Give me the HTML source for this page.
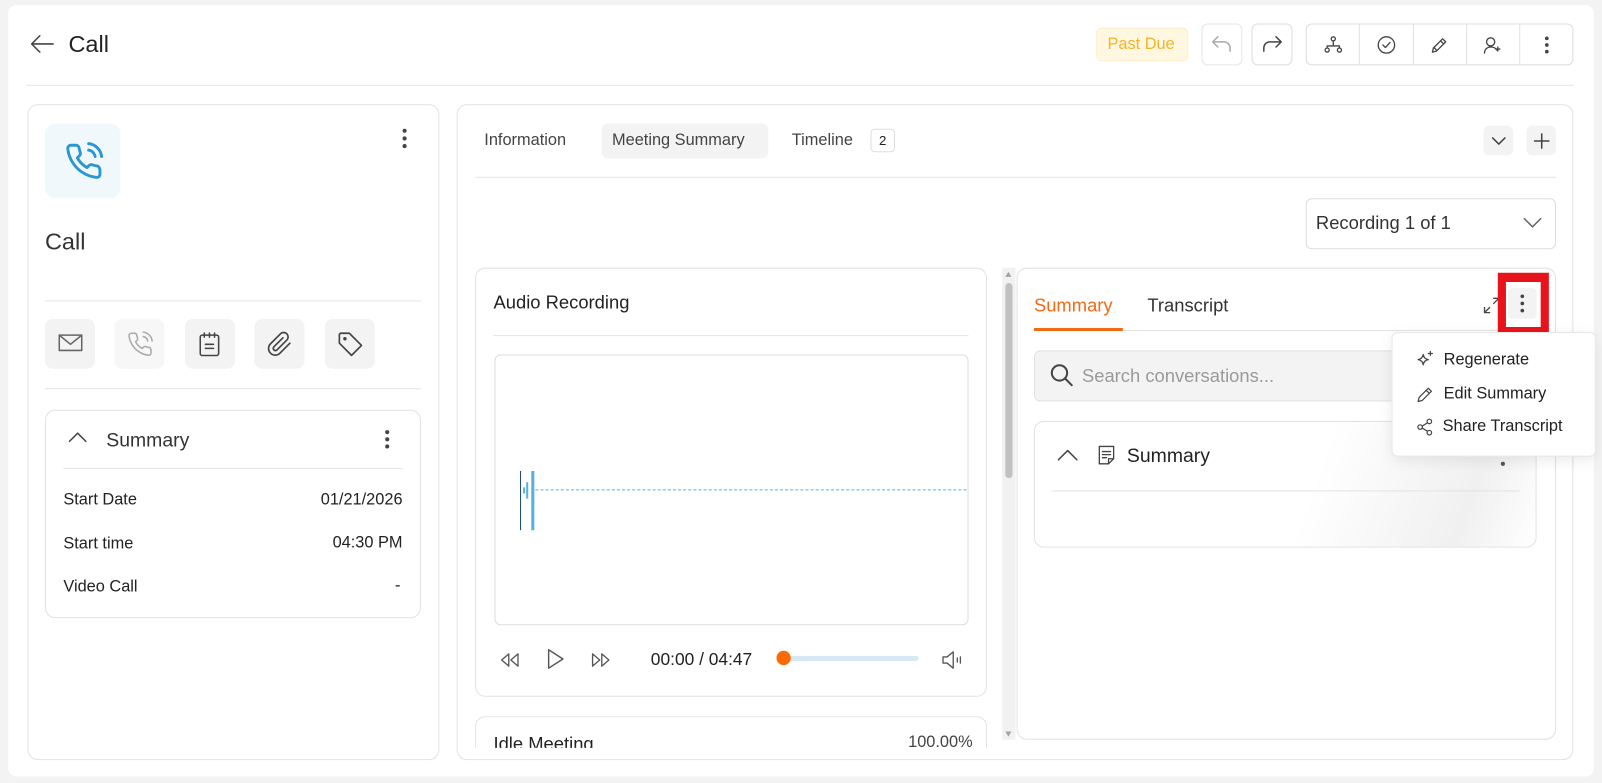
<!DOCTYPE html>
<html><head><meta charset="utf-8"><style>
*{box-sizing:border-box;margin:0;padding:0}
html,body{width:1602px;height:783px;overflow:hidden;background:#f3f3f3;font-family:"Liberation Sans",sans-serif;color:#333}
#w{position:absolute;left:0;top:0;width:1568px;height:766px;transform:scale(1.02168);transform-origin:0 0}
.a{position:absolute}
.card{position:absolute;background:#fff;border:1px solid #e2e2e2;border-radius:10px}
.hl{position:absolute;height:1px;background:#e3e3e3}
svg{position:absolute;fill:none;stroke:#444;stroke-width:1.5;stroke-linecap:round;stroke-linejoin:round}
.ib{position:absolute;width:49px;height:49px;border-radius:8px;background:#f3f3f3}
.t{position:absolute;white-space:nowrap}
</style></head><body><div id="w">
<div class="a" style="left:8px;top:5px;width:1552px;height:755px;background:#fff;border-radius:8px"></div>
<!-- header -->
<svg style="left:28px;top:32px" width="26" height="22" viewBox="0 0 26 22"><path d="M24 11H3M11 3L3 11l8 8"/></svg>
<div class="t" style="left:67px;top:30px;font-size:23px;color:#222">Call</div>
<div class="a" style="left:1073px;top:27px;width:90px;height:33px;background:#fff7e0;border:1px solid #fbeecb;border-radius:5px"></div>
<div class="t" style="left:1084px;top:35px;font-size:16px;color:#f4b42a">Past Due</div>
<div class="a" style="left:1176px;top:23px;width:40px;height:41px;border:1px solid #e5e5e5;border-radius:6px"></div>
<svg style="left:1185px;top:32px;stroke:#aaa" width="22" height="22" viewBox="0 0 22 22"><path d="M7 4L2 9l5 5M2 9h11a6 6 0 0 1 6 6v3"/></svg>
<div class="a" style="left:1225px;top:23px;width:40px;height:41px;border:1px solid #ddd;border-radius:6px"></div>
<svg style="left:1234px;top:32px" width="22" height="22" viewBox="0 0 22 22"><path d="M15 4l5 5-5 5M20 9H9a6 6 0 0 0-6 6v3"/></svg>
<div class="a" style="left:1278px;top:23px;width:262px;height:41px;border:1px solid #ddd;border-radius:6px"></div>
<div class="a" style="left:1330px;top:24px;width:1px;height:39px;background:#e2e2e2"></div>
<div class="a" style="left:1383px;top:24px;width:1px;height:39px;background:#e2e2e2"></div>
<div class="a" style="left:1435px;top:24px;width:1px;height:39px;background:#e2e2e2"></div>
<div class="a" style="left:1487px;top:24px;width:1px;height:39px;background:#e2e2e2"></div>
<svg style="left:1295px;top:34px;stroke-width:1.3" width="20" height="20" viewBox="0 0 20 20"><circle cx="10" cy="4" r="2"/><circle cx="4" cy="15" r="2"/><circle cx="16" cy="15" r="2"/><path d="M10 6v4M4 13v-2h12v2"/></svg>
<svg style="left:1347px;top:34px;stroke-width:1.3" width="20" height="20" viewBox="0 0 20 20"><circle cx="10" cy="10" r="8"/><path d="M6.5 10l2.5 2.5 4.5-5"/></svg>
<svg style="left:1399px;top:34px;stroke-width:1.3" width="20" height="20" viewBox="0 0 20 20"><path d="M3 17l1-4L13 4l3 3-9 9zM11 6l3 3M5 13l2 2"/></svg>
<svg style="left:1451px;top:34px;stroke-width:1.3" width="20" height="20" viewBox="0 0 20 20"><circle cx="8" cy="7" r="4"/><path d="M2 18c0-4 3-6 6-6s5 1 6 3M15 12v4M13 14h4"/></svg>
<svg style="left:1504px;top:34px;fill:#444;stroke:none" width="20" height="20" viewBox="0 0 20 20"><circle cx="10" cy="3.5" r="1.8"/><circle cx="10" cy="10" r="1.8"/><circle cx="10" cy="16.5" r="1.8"/></svg>
<div class="hl" style="left:26px;top:83px;width:1514px"></div>

<!-- left card -->
<div class="card" style="left:27px;top:102px;width:403px;height:642px"></div>
<div class="a" style="left:44px;top:121px;width:74px;height:73px;background:#f1f8fc;border-radius:10px"></div>
<svg style="left:63px;top:139px;stroke:#2a97d0;stroke-width:1.8" width="38" height="38" viewBox="0 0 24 24"><path d="M22 16.9v3a2 2 0 0 1-2.2 2 19.8 19.8 0 0 1-8.6-3.1 19.5 19.5 0 0 1-6-6A19.8 19.8 0 0 1 2.1 4.2 2 2 0 0 1 4.1 2h3a2 2 0 0 1 2 1.7c.1.9.4 1.8.7 2.7a2 2 0 0 1-.5 2.1L8 9.8a16 16 0 0 0 6 6l1.3-1.3a2 2 0 0 1 2.1-.4c.9.3 1.8.6 2.7.7a2 2 0 0 1 1.7 2z"/><path d="M15 5a5 5 0 0 1 4 4M15 1a9 9 0 0 1 8 8"/></svg>
<svg style="left:386px;top:124px;fill:#444;stroke:none" width="20" height="24" viewBox="0 0 20 24"><circle cx="10" cy="4" r="2"/><circle cx="10" cy="11.5" r="2"/><circle cx="10" cy="19" r="2"/></svg>
<div class="t" style="left:44px;top:223px;font-size:23px;color:#333">Call</div>
<div class="hl" style="left:44px;top:294px;width:368px"></div>
<div class="ib" style="left:44px;top:312px"></div>
<svg style="left:57px;top:326px;stroke:#666" width="24" height="20" viewBox="0 0 24 20"><rect x="1" y="2" width="22" height="15"/><path d="M1 2l11 9 11-9"/></svg>
<div class="ib" style="left:112px;top:312px;background:#f7f7f7"></div>
<svg style="left:124px;top:324px;stroke:#aaa;stroke-width:1.4" width="26" height="26" viewBox="0 0 24 24"><path d="M22 16.9v3a2 2 0 0 1-2.2 2 19.8 19.8 0 0 1-8.6-3.1 19.5 19.5 0 0 1-6-6A19.8 19.8 0 0 1 2.1 4.2 2 2 0 0 1 4.1 2h3a2 2 0 0 1 2 1.7c.1.9.4 1.8.7 2.7a2 2 0 0 1-.5 2.1L8 9.8a16 16 0 0 0 6 6l1.3-1.3a2 2 0 0 1 2.1-.4c.9.3 1.8.6 2.7.7a2 2 0 0 1 1.7 2z"/><path d="M15 5a5 5 0 0 1 4 4M15 1a9 9 0 0 1 8 8"/></svg>
<div class="ib" style="left:181px;top:312px"></div>
<svg style="left:193px;top:324px" width="24" height="26" viewBox="0 0 24 26"><rect x="3" y="4" width="18" height="20" rx="2"/><path d="M7 2v4M12 2v4M17 2v4M8 13h8M8 17h8"/></svg>
<div class="ib" style="left:249px;top:312px"></div>
<svg style="left:261px;top:324px" width="26" height="26" viewBox="0 0 24 24"><path d="M21 11l-9 9a6 6 0 0 1-8.5-8.5l9-9a4 4 0 0 1 5.7 5.7l-9 9a2 2 0 0 1-2.8-2.8l8.3-8.3"/></svg>
<div class="ib" style="left:318px;top:312px"></div>
<svg style="left:330px;top:324px" width="26" height="26" viewBox="0 0 24 24"><path d="M2 3v8l11 11 9-9L11 2H3z"/><circle cx="7" cy="7" r=".8" fill="#444"/></svg>
<div class="hl" style="left:44px;top:380px;width:368px"></div>
<div class="card" style="left:44px;top:401px;width:368px;height:204px"></div>
<svg style="left:66px;top:421px" width="20" height="14" viewBox="0 0 20 14"><path d="M2 11l8-8 8 8"/></svg>
<div class="t" style="left:104px;top:421px;font-size:19px;color:#333">Summary</div>
<svg style="left:369px;top:420px;fill:#444;stroke:none" width="20" height="22" viewBox="0 0 20 22"><circle cx="10" cy="3" r="2"/><circle cx="10" cy="10" r="2"/><circle cx="10" cy="17" r="2"/></svg>
<div class="hl" style="left:62px;top:458px;width:332px"></div>
<div class="t" style="left:62px;top:481px;font-size:16px;color:#222">Start Date</div>
<div class="t" style="right:1174px;top:481px;font-size:16px;color:#222">01/21/2026</div>
<div class="t" style="left:62px;top:524px;font-size:16px;color:#222">Start time</div>
<div class="t" style="right:1174px;top:523px;font-size:16px;color:#222">04:30 PM</div>
<div class="t" style="left:62px;top:566px;font-size:16px;color:#222">Video Call</div>
<div class="t" style="right:1176px;top:565px;font-size:16px;color:#222">-</div>

<!-- right card -->
<div class="card" style="left:447px;top:102px;width:1093px;height:642px"></div>
<div class="t" style="left:474px;top:129px;font-size:16px;color:#444">Information</div>
<div class="a" style="left:589px;top:121px;width:163px;height:34px;background:#f3f3f3;border-radius:6px"></div>
<div class="t" style="left:599px;top:129px;font-size:16px;color:#444">Meeting Summary</div>
<div class="t" style="left:775px;top:129px;font-size:16px;color:#444">Timeline</div>
<div class="a" style="left:852px;top:126px;width:24px;height:23px;border:1px solid #ddd;border-radius:4px;font-size:13px;text-align:center;line-height:21px;color:#222">2</div>
<div class="a" style="left:1452px;top:123px;width:29px;height:29px;background:#f3f3f3;border-radius:6px"></div>
<svg style="left:1459px;top:132px" width="16" height="12" viewBox="0 0 16 12"><path d="M2 3l6 6 6-6"/></svg>
<div class="a" style="left:1494px;top:123px;width:29px;height:29px;background:#f3f3f3;border-radius:6px"></div>
<svg style="left:1500px;top:129px" width="18" height="18" viewBox="0 0 18 18"><path d="M9 2v14M2 9h14"/></svg>
<div class="hl" style="left:465px;top:173px;width:1058px"></div>
<div class="a" style="left:1278px;top:194px;width:245px;height:50px;border:1px solid #ddd;border-radius:6px"></div>
<div class="t" style="left:1288px;top:208px;font-size:18px;color:#333">Recording 1 of 1</div>
<svg style="left:1490px;top:211px;stroke:#666" width="20" height="14" viewBox="0 0 20 14"><path d="M2 3l8 8 8-8"/></svg>

<!-- audio card -->
<div class="card" style="left:465px;top:262px;width:501px;height:420px"></div>
<div class="t" style="left:483px;top:286px;font-size:18px;color:#222">Audio Recording</div>
<div class="hl" style="left:483px;top:328px;width:465px"></div>
<div class="a" style="left:484px;top:347px;width:464px;height:265px;border:1px solid #ddd;border-radius:6px"></div>
<div class="a" style="left:509px;top:461px;width:1px;height:58px;background:#1a4a6a"></div>
<div class="a" style="left:512px;top:477px;width:2px;height:6px;background:#5ab0dc"></div>
<div class="a" style="left:515px;top:472px;width:2px;height:16px;background:#5ab0dc"></div>
<div class="a" style="left:520px;top:461px;width:3px;height:58px;background:#5ab0dc"></div>
<div class="a" style="left:524px;top:479px;width:422px;border-top:1px dashed #5ab0dc"></div>
<svg style="left:488px;top:637px;stroke:#555;stroke-width:1.3" width="22" height="18" viewBox="0 0 22 18"><path d="M10 3L3 9l7 6zM19 3l-7 6 7 6z"/></svg>
<svg style="left:533px;top:634px;stroke:#555;stroke-width:1.4" width="20" height="22" viewBox="0 0 20 22"><path d="M4 2v18l14-9z"/></svg>
<svg style="left:577px;top:637px;stroke:#555;stroke-width:1.3" width="22" height="18" viewBox="0 0 22 18"><path d="M3 3l7 6-7 6zM12 3l7 6-7 6z"/></svg>
<div class="t" style="left:637px;top:636px;font-size:17px;color:#222">00:00 / 04:47</div>
<div class="a" style="left:765px;top:642px;width:134px;height:5px;background:#d6e8f4;border-radius:3px"></div>
<div class="a" style="left:760px;top:637px;width:14px;height:14px;background:#ff6a00;border-radius:50%"></div>
<svg style="left:920px;top:635px;stroke:#555;stroke-width:1.3" width="24" height="22" viewBox="0 0 24 22"><path d="M3 8h4l6-5v16l-6-5H3zM17 9v4M20 8v6"/></svg>
<div class="a" style="left:465px;top:701px;width:501px;height:31px;overflow:hidden">
<div class="card" style="left:0;top:0;width:501px;height:80px"></div>
<div class="t" style="left:18px;top:17px;font-size:18px;color:#222">Idle Meeting</div>
<div class="t" style="right:14px;top:17px;font-size:16px;color:#444">100.00%</div>
</div>

<!-- scrollbar -->
<div class="a" style="left:981px;top:262px;width:13px;height:462px;background:#f1f1f1"></div>
<div class="a" style="left:984px;top:277px;width:7px;height:191px;background:#c1c1c1;border-radius:4px"></div>
<div class="a" style="left:984px;top:266px;width:0;height:0;border:3px solid transparent;border-bottom:5px solid #a3a3a3;border-top:0"></div>
<div class="a" style="left:984px;top:716px;width:0;height:0;border:3px solid transparent;border-top:5px solid #a3a3a3;border-bottom:0"></div>

<!-- summary panel -->
<div class="card" style="left:995px;top:262px;width:528px;height:462px"></div>
<div class="t" style="left:1012px;top:289px;font-size:18px;color:#f26a12">Summary</div>
<div class="a" style="left:1012px;top:321px;width:87px;height:3px;background:#f26a12"></div>
<div class="t" style="left:1123px;top:289px;font-size:18px;color:#333">Transcript</div>
<div class="hl" style="left:1099px;top:323px;width:405px"></div>
<svg style="left:1451px;top:290px;stroke-width:1.3" width="18" height="18" viewBox="0 0 18 18"><path d="M2 16l5-5M2 11v5h5M16 2l-5 5M16 7V2h-5"/></svg>
<div class="a" style="left:1476px;top:282px;width:28px;height:30px;background:#f3f3f3;border-radius:4px"></div>
<svg style="left:1480px;top:287px;fill:#444;stroke:none" width="20" height="22" viewBox="0 0 20 22"><circle cx="10" cy="3" r="1.8"/><circle cx="10" cy="10" r="1.8"/><circle cx="10" cy="17" r="1.8"/></svg>
<div class="a" style="left:1466px;top:267px;width:50px;height:62px;border:9px solid #e8141c;border-width:9px 8px"></div>
<div class="a" style="left:1012px;top:343px;width:380px;height:50px;background:#f3f3f3;border:1px solid #e2e2e2;border-radius:6px"></div>
<svg style="left:1027px;top:355px;stroke:#444;stroke-width:2" width="24" height="24" viewBox="0 0 24 24"><circle cx="10" cy="10" r="7.5"/><path d="M15.5 15.5L22 22"/></svg>
<div class="t" style="left:1059px;top:358px;font-size:18px;color:#9a9a9a">Search conversations...</div>
<div class="card" style="left:1012px;top:412px;width:492px;height:124px;background:linear-gradient(110deg,#fff 55%,#f0f0f0 85%,#fff)"></div>
<svg style="left:1034px;top:438px" width="22" height="14" viewBox="0 0 22 14"><path d="M2 12l9-9 9 9"/></svg>
<svg style="left:1074px;top:435px;stroke-width:1.3" width="20" height="22" viewBox="0 0 20 22"><path d="M2 2h14v12l-5 5H2zM11 19v-5h5M5 7h8M5 10h8M5 13h4"/></svg>
<div class="t" style="left:1103px;top:436px;font-size:19px;color:#222">Summary</div>
<div class="a" style="left:1469px;top:452px;width:4px;height:4px;background:#555;border-radius:50%"></div>
<div class="hl" style="left:1029px;top:480px;width:458px"></div>

<!-- dropdown menu -->
<div class="a" style="left:1362px;top:325px;width:200px;height:122px;background:#fff;border:1px solid #e8e8e8;border-radius:6px;box-shadow:0 4px 14px rgba(0,0,0,.08)"></div>
<svg style="left:1386px;top:343px;stroke-width:1.2" width="18" height="18" viewBox="0 0 18 18"><path d="M7 4c.5 3 2 4.5 5 5-3 .5-4.5 2-5 5-.5-3-2-4.5-5-5 3-.5 4.5-2 5-5zM14 1v4M12 3h4"/></svg>
<div class="t" style="left:1413px;top:344px;font-size:16px;color:#222">Regenerate</div>
<svg style="left:1386px;top:377px;stroke-width:1.2" width="18" height="18" viewBox="0 0 18 18"><path d="M2 16l1-4 9-9 3 3-9 9zM10 5l3 3"/></svg>
<div class="t" style="left:1413px;top:377px;font-size:16px;color:#222">Edit Summary</div>
<svg style="left:1386px;top:409px;stroke-width:1.2" width="18" height="18" viewBox="0 0 18 18"><circle cx="13" cy="3.5" r="2.2"/><circle cx="4" cy="9" r="2.2"/><circle cx="13" cy="14.5" r="2.2"/><path d="M6 8l5-3M6 10l5 3"/></svg>
<div class="t" style="left:1412px;top:409px;font-size:16px;color:#222">Share Transcript</div>
</div></body></html>
